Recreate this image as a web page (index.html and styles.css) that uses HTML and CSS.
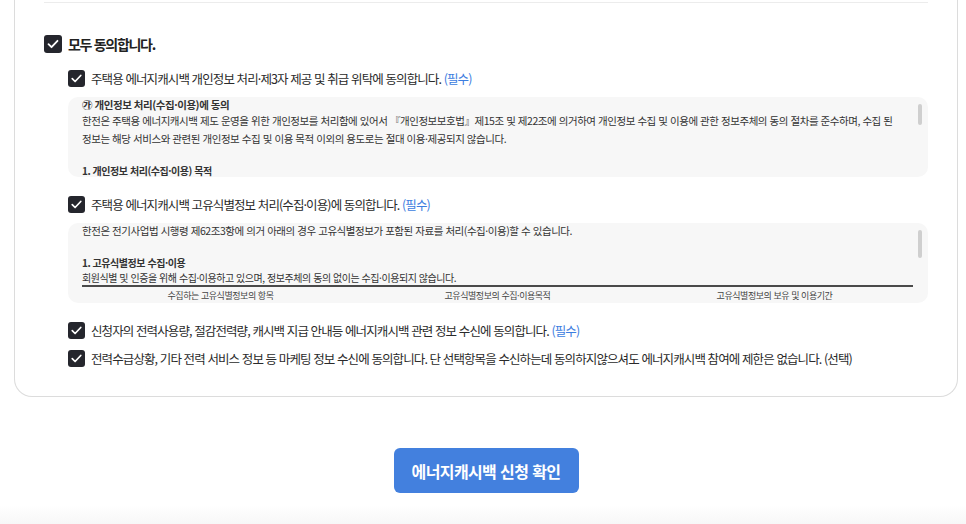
FILE: index.html
```
<!DOCTYPE html>
<html lang="ko">
  <head>
    <meta charset="utf-8">
    <title>에너지캐시백 신청</title>
    <link rel="stylesheet" href="styles.css">
  </head>
  <body>
    <div class="page">
      <div class="card">
        <div class="divider"></div>

        <label class="check-row all">
          <span class="box">
            <svg viewBox="0 0 18 18"><path d="M4.5 9.2l3 3 6-6.4" /></svg>
          </span>
          <span>모두 동의합니다.</span>
        </label>

        <div class="agree-list">
          <label class="check-row item">
            <span class="box">
              <svg viewBox="0 0 18 18"><path d="M4.5 9.2l3 3 6-6.4" /></svg>
            </span>
            <span>주택용 에너지캐시백 개인정보 처리·제3자 제공 및 취급 위탁에 동의합니다. <em class="req">(필수)</em></span>
          </label>
          <div class="terms">
            <div class="terms-inner">
              <p class="t-title">㉮ 개인정보 처리(수집·이용)에 동의</p>
              <p>한전은 주택용 에너지캐시백 제도 운영을 위한 개인정보를 처리함에 있어서 『개인정보보호법』제15조 및 제22조에 의거하여 개인정보 수집 및 이용에 관한 정보주체의 동의 절차를 준수하며, 수집 된 정보는 해당 서비스와 관련된 개인정보 수집 및 이용 목적 이외의 용도로는 절대 이용·제공되지 않습니다.</p>
              <p class="t-sub">1. 개인정보 처리(수집·이용) 목적</p>
            </div>
          </div>

          <label class="check-row item">
            <span class="box">
              <svg viewBox="0 0 18 18"><path d="M4.5 9.2l3 3 6-6.4" /></svg>
            </span>
            <span>주택용 에너지캐시백 고유식별정보 처리(수집·이용)에 동의합니다. <em class="req">(필수)</em></span>
          </label>
          <div class="terms second">
            <div class="terms-inner">
              <p class="t-first">한전은 전기사업법 시행령 제62조3항에 의거 아래의 경우 고유식별정보가 포함된 자료를 처리(수집·이용)할 수 있습니다.</p>
              <p class="t-sub">1. 고유식별정보 수집·이용</p>
              <p class="t-note">회원식별 및 인증을 위해 수집·이용하고 있으며, 정보주체의 동의 없이는 수집·이용되지 않습니다.</p>
              <table class="t-table">
                <tr>
                  <th>수집하는 고유식별정보의 항목</th>
                  <th>고유식별정보의 수집·이용목적</th>
                  <th>고유식별정보의 보유 및 이용기간</th>
                </tr>
              </table>
            </div>
          </div>

          <label class="check-row item gap">
            <span class="box">
              <svg viewBox="0 0 18 18"><path d="M4.5 9.2l3 3 6-6.4" /></svg>
            </span>
            <span>신청자의 전력사용량, 절감전력량, 캐시백 지급 안내등 에너지캐시백 관련 정보 수신에 동의합니다. <em class="req">(필수)</em></span>
          </label>
          <label class="check-row item">
            <span class="box">
              <svg viewBox="0 0 18 18"><path d="M4.5 9.2l3 3 6-6.4" /></svg>
            </span>
            <span>전력수급상황, 기타 전력 서비스 정보 등 마케팅 정보 수신에 동의합니다. 단 선택항목을 수신하는데 동의하지않으셔도 에너지캐시백 참여에 제한은 없습니다. (선택)</span>
          </label>
        </div>
      </div>

      <div class="actions">
        <button class="submit">에너지캐시백 신청 확인</button>
      </div>
    </div>
    <div class="footer"></div>
  </body>
</html>
```

FILE: styles.css
```
body{
  margin: 0;
  background-color: #fff;
  color: #222;
  font-family: "Noto Sans CJK KR", "Noto Sans", sans-serif;
}
.page{
  margin: 0 8px 0 14px;
}
.card{
  border: 1px solid #dcdcdc;
  border-top: none;
  border-radius: 0 0 18px 18px;
  padding: 0 29px 29px 29px;
}
.divider{
  height: 2px;
  border-bottom: 1px solid #ececec;
}
.check-row{
  display: flex;
  align-items: center;
  height: 18px;
  cursor: pointer;
}
.box{
  flex: none;
  display: flex;
  align-items: center;
  justify-content: center;
  background-color: #25262d;
  border-radius: 3px;
}
.box svg{
  width: 100%;
  height: 100%;
}
.box path{
  fill: none;
  stroke: #fff;
  stroke-width: 1.8;
  stroke-linecap: round;
  stroke-linejoin: round;
}
.all{
  margin-top: 32px;
  font-size: 14px;
  font-weight: bold;
  letter-spacing: -1.3px;
}
.all .box{
  width: 18px;
  height: 18px;
  margin-right: 6px;
}
.agree-list{
  padding-left: 24px;
  padding-top: 16px;
}
.item{
  font-size: 12.5px;
  letter-spacing: -0.9px;
  color: #2a2a2a;
}
.item .box{
  width: 17px;
  height: 17px;
  margin-right: 6px;
}
.item + .item{
  margin-top: 10px;
}
.terms + .item{
  margin-top: 18px;
}
.item.gap{
  margin-top: 18px;
}
.req{
  font-style: normal;
  color: #3c7de0;
}
.terms{
  position: relative;
  margin-top: 10px;
  height: 80px;
  background-color: #f7f7f7;
  border-radius: 10px;
  overflow: hidden;
}
.terms::after{
  content: "";
  position: absolute;
  top: 7px;
  right: 6px;
  width: 4px;
  height: 21px;
  border-radius: 2px;
  background-color: #cfcfcf;
}
.terms.second::after{
  height: 28px;
}
.terms-inner{
  padding: 0 25px 0 14px;
  font-size: 10.5px;
  line-height: 18px;
  letter-spacing: -0.45px;
  color: #333;
}
.terms-inner p{
  margin: 0;
}
.terms-inner .t-title{
  font-weight: bold;
  line-height: 15px;
}
.terms-inner .t-first{
  line-height: 16px;
}
.terms-inner .t-sub{
  font-weight: bold;
  margin-top: 14px;
  font-size: 10px;
}
.second .t-sub{
  margin-top: 16px;
  line-height: 15px;
}
.terms-inner .t-note{
  font-size: 10px;
  line-height: 15px;
}
.t-table{
  width: calc(100% + 10px);
  border-collapse: collapse;
  border-top: 2px solid #4a4a4a;
}
.t-table th{
  width: 33.3%;
  font-weight: normal;
  font-size: 9px;
  line-height: 12px;
  color: #444;
  padding: 3px 0 0 0;
}
.actions{
  display: flex;
  justify-content: center;
  padding-top: 51px;
}
.submit{
  width: 185px;
  height: 45px;
  border: none;
  border-radius: 6px;
  background-color: #4380de;
  color: #fff;
  font-family: "Noto Sans CJK KR", sans-serif;
  font-size: 16px;
  font-weight: bold;
  letter-spacing: -0.6px;
  cursor: pointer;
}
.footer{
  margin-top: 12px;
  height: 30px;
  background: linear-gradient(#fff, #f2f2f2);
}
```
